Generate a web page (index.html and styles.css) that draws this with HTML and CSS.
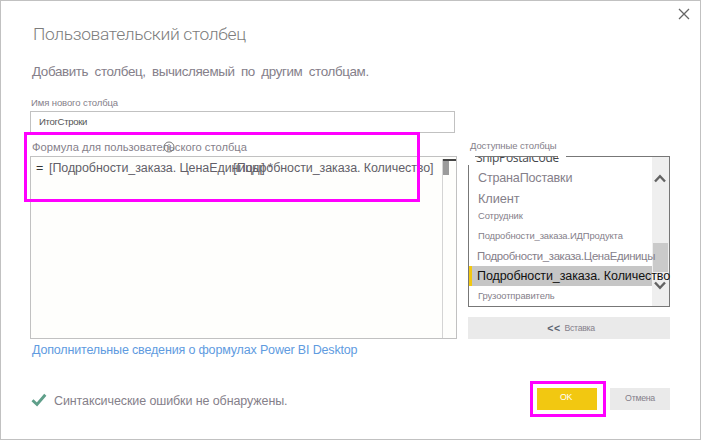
FILE: index.html
```html
<!DOCTYPE html>
<html lang="ru">
<head>
<meta charset="utf-8">
<title>Пользовательский столбец</title>
<link rel="stylesheet" href="styles.css">
</head>
<body>
<main class="dialog">
  <svg class="close" viewBox="0 0 12 12"><path d="M1 1 11 11M11 1 1 11"/></svg>
  <h1 class="title">Пользовательский столбец</h1>
  <p class="subtitle">Добавить столбец, вычисляемый по другим столбцам.</p>
  <div class="name-label">Имя нового столбца</div>
  <div class="name-input">ИтогСтроки</div>
  <div class="columns">
    <section class="formula">
      <div class="formula-label">Формула для пользовательского столбца
        <svg class="info" viewBox="0 0 12 12"><circle cx="6" cy="6" r="5"/><path d="M6 5v4M6 3v1"/></svg>
      </div>
      <div class="editor">
        <div class="code"><span class="eq">=</span><span class="term">[Подробности_заказа. ЦенаЕдиницы] *</span><span class="term term-over">[Подробности_заказа. Количество]</span></div>
        <div class="editor-scroll"><i></i></div>
      </div>
      <a class="link">Дополнительные сведения о формулах Power BI Desktop</a>
    </section>
    <section class="available">
      <div class="available-label">Доступные столбцы</div>
      <div class="list">
        <div class="items">
          <div class="item clipped"><span>ShipPostalCode</span></div>
          <div class="item country">СтранаПоставки</div>
          <div class="item client">Клиент</div>
          <div class="item small">Сотрудник</div>
          <div class="item small">Подробности_заказа.ИДПродукта</div>
          <div class="item price">Подробности_заказа.ЦенаЕдиницы</div>
          <div class="item selected">Подробности_заказа. Количество</div>
          <div class="item small">Грузоотправитель</div>
        </div>
        <div class="scroll">
          <svg class="up" viewBox="0 0 12 9"><path d="M1 7.5 6 2.2l5 5.3"/></svg>
          <div class="thumb"></div>
          <svg class="down" viewBox="0 0 12 9"><path d="M1 1.5 6 6.8l5-5.3"/></svg>
        </div>
        <b class="corner"></b><b class="gap"></b>
      </div>
      <div class="insert"><span class="arrows">&lt;&lt;</span><span>Вставка</span></div>
    </section>
  </div>
  <footer class="footer">
    <svg class="check" viewBox="0 0 16 14"><path d="M1.5 7.2 6 11.5 14.3 1.8"/></svg>
    <span class="status">Синтаксические ошибки не обнаружены.</span>
    <div class="button ok">OK</div>
    <div class="button cancel">Отмена</div>
  </footer>
  <div class="mark mark-formula"></div>
  <div class="mark mark-ok"></div>
</main>
</body>
</html>
```
FILE: styles.css
```css
* { box-sizing: border-box; }
body { margin: 0; font-family: "Liberation Sans", sans-serif; color: #85808a; background: #fff; }
.dialog { position: relative; width: 701px; height: 440px; border: 1px solid #c1c1c1; padding: 21px 30px 0 29px; overflow: hidden; white-space: nowrap; }
.close { position: absolute; left: 677px; top: 7px; width: 12px; height: 12px; fill: none; stroke: #666; stroke-width: 1.3; }
.title { margin: 0; padding-left: 3px; height: 24px; font: 300 17.4px/24px Roboto, "Liberation Sans", sans-serif; letter-spacing: -.33px; color: #7c7c7c; }
.subtitle { margin: 13px 0 0; padding-left: 2px; height: 24px; font-size: 13.4px; line-height: 26px; letter-spacing: -.37px; word-spacing: 3px; }
.name-label { margin-top: 12px; padding-left: 1px; height: 16px; font-size: 9.5px; line-height: 15px; letter-spacing: -.1px; }
.name-input { width: 425px; height: 22px; border: 1px solid #c1c1c1; padding-left: 8px; font-size: 9.6px; line-height: 19px; letter-spacing: -.35px; color: #555; }
.columns { display: grid; grid-template-columns: 427px 202px; column-gap: 11px; height: 226px; padding-top: 4px; }
.formula-label { position: relative; height: 19px; padding-left: 2px; font-size: 11.2px; line-height: 20px; }
.info { position: absolute; left: 133px; top: 4px; width: 12px; height: 12px; fill: none; stroke: #777; stroke-width: 1; }
.editor { display: flex; height: 183px; border: 1px solid #c1c1c1; background: #fefefc; }
.code { width: 412px; height: 21px; padding-left: 5px; font-size: 12.5px; line-height: 22px; letter-spacing: -.08px; color: #625e68; }
.eq { display: inline-block; width: 13px; color: #333; }
.term-over { margin-left: -39.5px; }
.editor-scroll { flex: none; width: 14px; margin-top: 2px; border-left: 1px solid #d4d4d4; }
.editor-scroll i { display: block; height: 16px; border-top: 2px solid #444; background: linear-gradient(90deg, #9b9b9b 6px, transparent 6px); }
.link { display: block; padding-left: 2px; font-size: 12.5px; line-height: 23px; letter-spacing: -.16px; color: #609bdf; }
.available-label { height: 19px; padding-left: 2px; font-size: 9.5px; line-height: 18px; letter-spacing: -.1px; }
.list { position: relative; display: flex; height: 151px; border: 1px solid #777; }
.items { width: 183px; }
.item { height: 20px; padding-left: 9px; line-height: 20px; }
.clipped { height: 9px; padding-left: 7px; overflow: hidden; }
.clipped span { display: block; margin-top: -8px; font: 12px/17px "Open Sans", sans-serif; letter-spacing: -.32px; color: #43464b; }
.country { font-size: 12.6px; line-height: 24px; letter-spacing: -.2px; }
.client { font-size: 12.8px; line-height: 25px; letter-spacing: -.1px; }
.small { font-size: 9.4px; letter-spacing: -.1px; }
.price { position: relative; z-index: 1; padding-left: 8px; font-size: 11.4px; letter-spacing: -.38px; }
.selected { position: relative; z-index: 1; padding-left: 5px; border-left: 3px solid #f2c811; background: #c6c6c6; font-size: 12.5px; letter-spacing: -.09px; color: #111; }
.scroll { flex: 1; background: #efefef; }
.scroll svg { display: block; width: 12px; height: 9px; margin-left: 2px; fill: none; stroke: #636363; stroke-width: 2.4; }
.scroll .up { margin-top: 17px; }
.thumb { height: 29px; margin: 60px 1px 0; background: #cacaca; }
.scroll .down { margin-top: 9px; }
.corner, .gap { position: absolute; background: #fff; }
.corner { left: -1px; top: -1px; width: 7px; height: 9px; }
.gap { left: 89px; top: -1px; width: 8px; height: 2px; }
.insert { display: flex; justify-content: center; height: 22px; margin-top: 10px; padding-left: 4px; gap: 4px; background: #eaeaea; font-size: 8.7px; line-height: 22px; letter-spacing: -.3px; }
.arrows { font-size: 10.5px; font-weight: bold; letter-spacing: .5px; color: #5c6470; }
.footer { display: flex; align-items: center; height: 36px; margin-top: 22px; padding-left: 1px; }
.check { width: 16px; height: 14px; margin-top: 2px; fill: none; stroke: #5f9f8a; stroke-width: 2.9; }
.status { margin: 3px auto 0 7px; font-size: 12.5px; letter-spacing: -.1px; }
.button { width: 60px; height: 22px; font-size: 8.8px; line-height: 20px; letter-spacing: -.3px; text-align: center; background: #eaeaea; }
.ok { margin-right: 13px; padding-right: 2px; background: #f2c811; color: #fff; font-size: 8.8px; line-height: 19px; }
.mark { position: absolute; border: 3px solid #f0f; }
.mark-formula { left: 23px; top: 131px; width: 396px; height: 70px; }
.mark-ok { left: 529px; top: 380px; width: 76px; height: 36px; }
```
